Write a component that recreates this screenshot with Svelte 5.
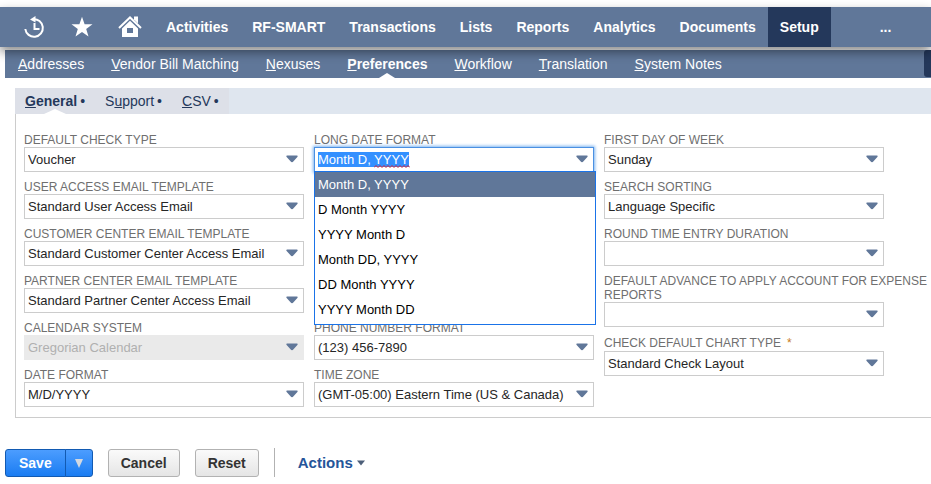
<script>
  const menu = ['Activities', 'RF-SMART', 'Transactions', 'Lists', 'Reports', 'Analytics', 'Documents', 'Setup'];
  const sections = ['Addresses', 'Vendor Bill Matching', 'Nexuses', 'Preferences', 'Workflow', 'Translation', 'System Notes'];
  const tabs = [
    { before: '', key: 'G', after: 'eneral', active: true },
    { before: 'S', key: 'u', after: 'pport' },
    { before: '', key: 'C', after: 'SV' }
  ];
  const left = [
    { id: 'check-type', label: 'DEFAULT CHECK TYPE', value: 'Voucher' },
    { id: 'user-email', label: 'USER ACCESS EMAIL TEMPLATE', value: 'Standard User Access Email' },
    { id: 'customer-email', label: 'CUSTOMER CENTER EMAIL TEMPLATE', value: 'Standard Customer Center Access Email' },
    { id: 'partner-email', label: 'PARTNER CENTER EMAIL TEMPLATE', value: 'Standard Partner Center Access Email' },
    { id: 'calendar', label: 'CALENDAR SYSTEM', value: 'Gregorian Calendar', disabled: true },
    { id: 'date-format', label: 'DATE FORMAT', value: 'M/D/YYYY' }
  ];
  const middle = [
    { id: 'phone-format', label: 'PHONE NUMBER FORMAT', value: '(123) 456-7890' },
    { id: 'time-zone', label: 'TIME ZONE', value: '(GMT-05:00) Eastern Time (US & Canada)' }
  ];
  const right = [
    { id: 'first-day', label: 'FIRST DAY OF WEEK', value: 'Sunday' },
    { id: 'sorting', label: 'SEARCH SORTING', value: 'Language Specific' },
    { id: 'round-time', label: 'ROUND TIME ENTRY DURATION', value: '' },
    { id: 'advance', label: 'DEFAULT ADVANCE TO APPLY ACCOUNT FOR EXPENSE REPORTS', value: '' },
    { id: 'chart-type', label: 'CHECK DEFAULT CHART TYPE', value: 'Standard Check Layout', required: true }
  ];
  const formats = ['Month D, YYYY', 'D Month YYYY', 'YYYY Month D', 'Month DD, YYYY', 'DD Month YYYY', 'YYYY Month DD'];

  let longDate = $state(formats[0]);
  let open = $state(true);

  function focusAndSelect(node) {
    node.focus();
    node.select();
  }

  function choose(format) {
    longDate = format;
    open = false;
  }
</script>

{#snippet arrow()}
  <svg class="arrow" width="12" height="8" viewBox="0 0 12 8" aria-hidden="true">
    <path d="M1.2 .5h9.6q1.2 0 .8 1.2L7.5 6.3Q6 8 4.500 6.300L.4 1.700Q0 .5 1.200 .5z" fill="#607799" />
  </svg>
{/snippet}

{#snippet field(f)}
  <div class="field">
    <label for={f.id} class:required={f.required}>{f.label}{#if f.required}<span class="star">*</span>{/if}</label>
    <div class="control">
      <select id={f.id} disabled={f.disabled} required={f.required}>
        <option>{f.value}</option>
      </select>
      {@render arrow()}
    </div>
  </div>
{/snippet}

<div class="page">
  <nav class="main" aria-label="Main">
    <a class="icon" href="#recent" aria-label="Recent records">
      <svg width="24" height="24" viewBox="0 0 24 24" fill="none" stroke="#fff" stroke-width="2">
        <path d="M11 4.200A8.800 8.800 0 1 1 3.300 14" />
        <path d="M12.500 8v6h5" />
        <path d="M8 4.500l5.500-3.500v6.500z" fill="#fff" stroke="none" />
      </svg>
    </a>
    <a class="icon" href="#shortcuts" aria-label="Shortcuts">
      <svg width="24" height="24" viewBox="0 0 24 24" fill="#fff">
        <path d="M12 1.800l2.600 7.400h7.900l-6.300 4.700 2.300 7.700L12 17l-6.500 4.600 2.300-7.700L1.500 9.200h7.900z" />
      </svg>
    </a>
    <a class="icon" href="#home" aria-label="Home">
      <svg width="24" height="24" viewBox="0 0 24 24" fill="#fff">
        <path d="M1 13L12 2.500 23 13" fill="none" stroke="#fff" stroke-width="2" />
        <path d="M16 1.500h4v7l-4-4z" />
        <path d="M12 5.800l8 7.600V22H4v-8.600zM9 13v5h6v-5z" fill-rule="evenodd" />
      </svg>
    </a>
    {#each menu as item}
      <a class="item" class:current={item === 'Setup'} href="#{item.toLowerCase()}">{item}</a>
    {/each}
    <button class="more" type="button" aria-label="More">...</button>
  </nav>

  <nav class="sub" aria-label="Sections">
    {#each sections as s}
      <a class:current={s === 'Preferences'} href="#{s.toLowerCase().replaceAll(' ', '-')}"><u>{s[0]}</u>{s.slice(1)}</a>
    {/each}
    <button class="scroll" type="button" aria-label="Next sections"></button>
  </nav>

  <main>
    <div class="tabs">
      <div class="tablist">
        {#each tabs as t}
          <a class:current={t.active} href="#{t.key}"><span>{t.before}<u>{t.key}</u>{t.after}</span><i>•</i></a>
        {/each}
      </div>
    </div>

    <form class="panel">
      <div class="column">
        {#each left as f}{@render field(f)}{/each}
      </div>
      <div class="column">
        <div class="field">
          <label for="long-date">LONG DATE FORMAT</label>
          <div class="control combo">
            <input id="long-date" type="text" role="combobox" aria-expanded={open} aria-controls="formats" spellcheck="false" autocomplete="off" bind:value={longDate} onclick={() => (open = true)} use:focusAndSelect />
            {@render arrow()}
            {#if open}
              <svg class="squiggle" width="36" height="3" viewBox="0 0 36 3" aria-hidden="true">
                <path d="M0 2.500l2-2 2 2 2-2 2 2 2-2 2 2 2-2 2 2 2-2 2 2 2-2 2 2 2-2 2 2 2-2 2 2 2-2 2 2" fill="none" stroke="#e0202c" />
              </svg>
              <ul id="formats" role="listbox">
                {#each formats as f}
                  <li role="option" aria-selected={f === longDate}>
                    <button type="button" tabindex="-1" onclick={() => choose(f)}>{f}</button>
                  </li>
                {/each}
              </ul>
            {/if}
          </div>
        </div>
        <div class="space"></div>
        {#each middle as f}{@render field(f)}{/each}
      </div>
      <div class="column">
        {#each right as f}{@render field(f)}{/each}
      </div>
    </form>
  </main>

  <footer>
    <div class="split">
      <button class="primary" type="button">Save</button>
      <button class="primary caret" type="button" aria-label="Save options">
        <svg width="8" height="9" viewBox="0 0 8 9"><path d="M0 0h8L4 9z" fill="#d4d9e0" /></svg>
      </button>
    </div>
    <button class="plain" type="button">Cancel</button>
    <button class="plain" type="button">Reset</button>
    <div class="rule"></div>
    <button class="actions" type="button">
      Actions
      <svg width="8" height="6" viewBox="0 0 8 6"><path d="M0 .5h8L4 5.500z" fill="#4d5f79" /></svg>
    </button>
  </footer>
</div>

<style>
  :global(body) {
    background: #fff;
    overflow: hidden;
  }

  .page {
    padding-top: 7px;
    font: 14px/16px 'Liberation Sans', Arial, sans-serif;
  }

  .page * {
    box-sizing: border-box;
  }

  a {
    color: inherit;
    text-decoration: none;
  }

  button,
  input,
  select {
    margin: 0;
    font: inherit;
  }

  .main {
    position: relative;
    z-index: 1;
    display: flex;
    height: 40px;
    padding-left: 10px;
    background: #607799;
    box-shadow: 0 5px 10px rgba(0, 0, 0, 0.45);
    color: #fff;
    font-weight: bold;
  }

  .main a,
  .more {
    display: flex;
    align-items: center;
    padding: 0 12px;
  }

  .main .current {
    background: #24385b;
  }

  .main .more {
    margin-left: 37px;
    border: 0;
    background: none;
    color: inherit;
  }

  .sub {
    position: relative;
    display: flex;
    gap: 27px;
    height: 28px;
    margin: 3px 0 0 5px;
    padding-left: 13px;
    background: #607799;
    color: #fff;
    line-height: 28px;
  }

  .sub .current,
  .tablist .current {
    position: relative;
    font-weight: bold;
  }

  .sub .current::after,
  .tablist .current::after {
    content: '';
    position: absolute;
    bottom: 0;
    left: 50%;
    margin-left: -8px;
    border: 8px solid transparent;
    border-top: 0;
    border-bottom: 5px solid #fff;
  }

  .scroll {
    width: 7px;
    height: 27px;
    margin-left: auto;
    padding: 0;
    border: 0;
    border-radius: 3px 0 0 3px;
    background: #24385b;
  }

  main {
    margin: 10px 0 0 15px;
  }

  .tabs {
    display: flex;
    background: #dfe6ef;
  }

  .tablist {
    display: flex;
    height: 26px;
    background: #dde0e8;
    color: #24385b;
    line-height: 26px;
  }

  .tablist a {
    display: flex;
    gap: 3px;
    padding: 0 10px;
  }

  .tablist i {
    font-style: normal;
    font-weight: normal;
  }

  .tablist .current::after {
    margin-left: -11px;
    border-right-width: 11px;
    border-left-width: 11px;
  }

  .panel {
    display: grid;
    grid-template-columns: minmax(0, 280px) minmax(0, 280px) minmax(0, 1fr);
    gap: 10px;
    padding: 19px 0 10px 8px;
    border: solid #ccc;
    border-width: 0 0 1px 1px;
  }

  .column {
    display: flex;
    flex-direction: column;
    gap: 8px;
  }

  .space {
    height: 133px;
  }

  label {
    display: block;
    color: #6f6f6f;
    font-size: 12px;
    line-height: 14px;
  }

  .required {
    line-height: 16px;
  }

  .star {
    margin-left: 6px;
    color: #c87a1c;
  }

  .control {
    position: relative;
    max-width: 280px;
    height: 25px;
    font-size: 13px;
  }

  select,
  input {
    appearance: none;
    display: block;
    width: 100%;
    height: 25px;
    padding: 0 24px 0 3px;
    border: 1px solid #ccc;
    border-radius: 0;
    outline: 0;
    background: #fff;
    color: #262626;
  }

  select:disabled {
    border-color: #eaeaea;
    background: #eaeaea;
    color: #b0b0b0;
    opacity: 1;
  }

  .arrow {
    position: absolute;
    top: 8px;
    right: 6px;
    pointer-events: none;
  }

  input {
    border-color: #4a90e2;
    box-shadow: 0 0 3px 1px #7ab2f0;
  }

  input::selection {
    background: #3390ff;
    color: #fff;
  }

  .squiggle {
    position: absolute;
    top: 18px;
    left: 60px;
    pointer-events: none;
  }

  ul {
    position: absolute;
    z-index: 2;
    top: 24px;
    left: 0;
    width: calc(100% + 2px);
    margin: 0;
    padding: 0 0 2px;
    border: 1px solid #1a73e8;
    background: #fff;
    list-style: none;
  }

  li button {
    display: block;
    width: 100%;
    height: 25px;
    padding: 0 3px;
    border: 0;
    background: none;
    color: #000;
    text-align: left;
  }

  li[aria-selected='true'] button {
    background: #607799;
    color: #fff;
  }

  footer {
    display: flex;
    align-items: center;
    gap: 15px;
    padding: 30px 0 6px 5px;
    font-weight: bold;
  }

  .split {
    display: flex;
  }

  footer button {
    height: 28px;
    padding: 0 12px;
    border: 1px solid #b2b2b2;
    border-radius: 3px;
    background: linear-gradient(#fafafa, #e5e5e5);
    color: #333;
  }

  footer .primary {
    padding: 0 13px;
    border-color: #125ab2;
    border-radius: 3px 0 0 3px;
    background: linear-gradient(#4c9dff, #1a7cf2);
    color: #fff;
  }

  footer .caret {
    margin-left: -1px;
    padding: 0 9px;
    border-radius: 0 3px 3px 0;
  }

  .rule {
    width: 1px;
    height: 29px;
    background: #b2b2b2;
  }

  footer .actions {
    display: flex;
    align-items: center;
    gap: 4px;
    padding: 0 8px;
    border: 0;
    background: none;
    color: #255599;
    font-size: 15px;
  }
</style>
